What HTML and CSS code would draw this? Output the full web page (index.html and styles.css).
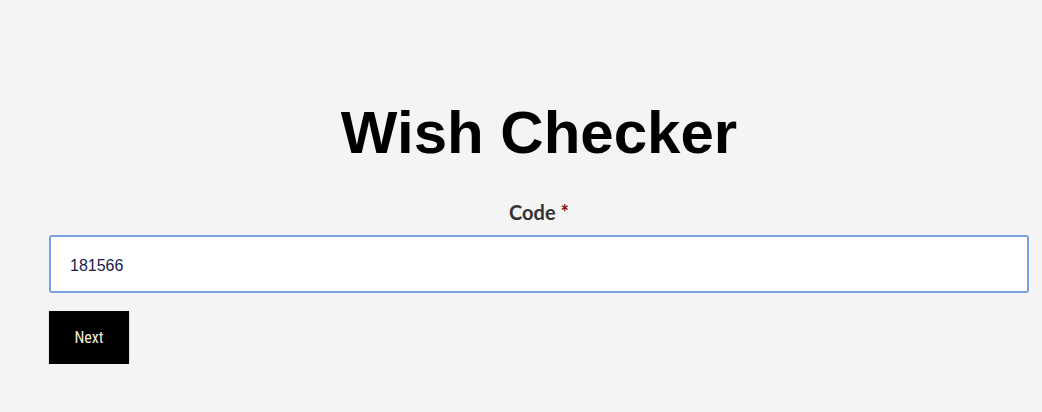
FILE: index.html
```html
<!DOCTYPE html>
<html lang="en">
<head>
    <meta charset="UTF-8">
    <meta name="viewport" content="width=device-width, initial-scale=1.0">
    <title>Wish Checker</title>
    <link rel="stylesheet" href="styles.css">
</head>
<body>
    <div class="checker-container">
        <h1>Wish Checker</h1>
        <form id="checkerForm">
            <label for="code" class="code-label">Code <span class="required">*</span></label>
            <input type="text" id="code" name="code" class="code-input" value="181566">
            <button type="submit" class="next-btn">Next</button>
        </form>
    </div>
</body>
</html>
```

FILE: styles.css
```css
body {
    font-family: "Liberation Sans", Arial, sans-serif;
    background-color: #f4f4f4;
    margin: 0;
    padding: 0;
}
.checker-container {
    padding: 98px 13px 0 49px;
}
.checker-container h1 {
    margin: 0;
    text-align: center;
    font-size: 60px;
    font-weight: bold;
    line-height: 69px;
    color: #000;
}
#checkerForm {
    display: flex;
    flex-direction: column;
    align-items: flex-start;
}
.code-label {
    align-self: center;
    margin-top: 33px;
    font-family: Lato, "Open Sans", sans-serif;
    font-size: 20px;
    font-weight: bold;
    color: #333;
    line-height: 24px;
}
.required {
    color: #7a0f16;
}
.code-input {
    box-sizing: border-box;
    width: 100%;
    height: 58px;
    margin-top: 11px;
    padding: 3px 19px 0;
    border: 2px solid #7b9fe0;
    border-radius: 3px;
    background-color: #fff;
    font-family: "Liberation Sans", Arial, sans-serif;
    font-size: 16px;
    color: #1a2050;
    outline: none;
}
.next-btn {
    margin-top: 18px;
    width: 80px;
    height: 53px;
    background-color: #000;
    color: #f4ecd8;
    border: none;
    font-family: "Liberation Sans Narrow", "Roboto Condensed", sans-serif;
    font-size: 16px;
    box-shadow: 0 1px 2px rgba(0, 0, 0, 0.2);
    cursor: pointer;
}
```
